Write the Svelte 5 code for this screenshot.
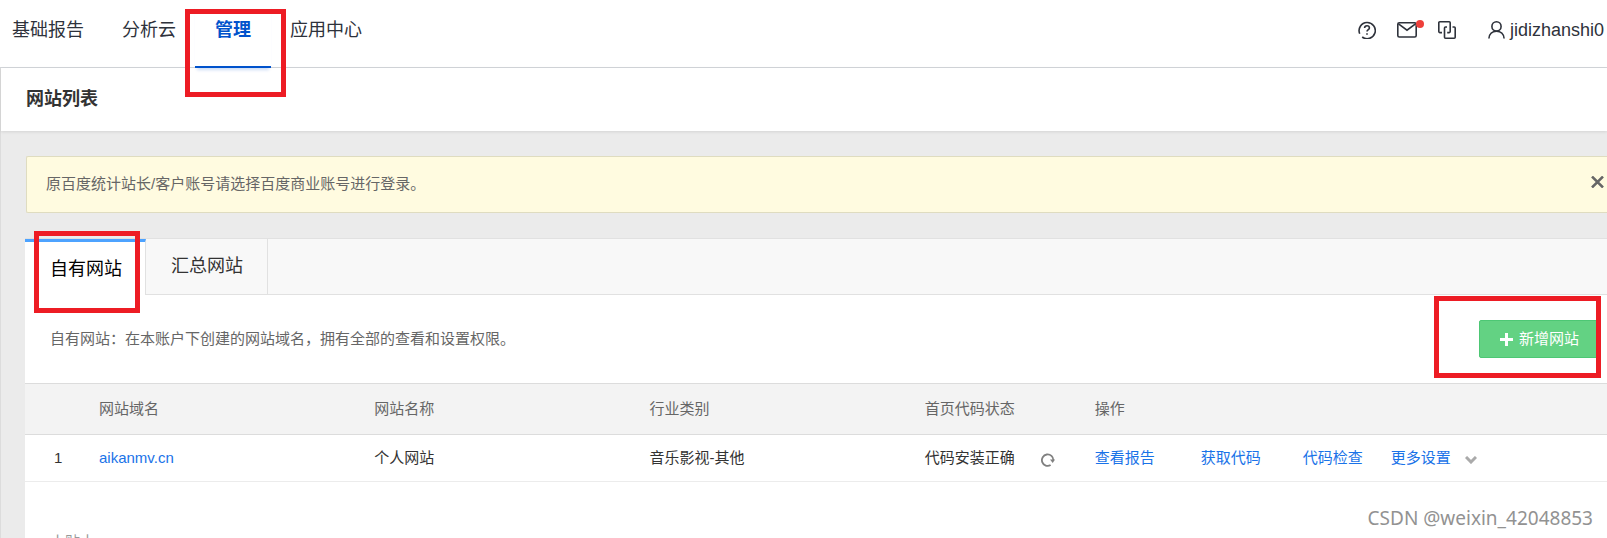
<script lang="ts">
    const navItems = ['基础报告', '分析云', '管理', '应用中心'];
    let activeNav = $state('管理');

    const tabs = ['自有网站', '汇总网站'];
    let activeTab = $state('自有网站');

    let showNotice = $state(true);

    const sites = [
        { id: 1, domain: 'aikanmv.cn', name: '个人网站', category: '音乐影视-其他', status: '代码安装正确' },
    ];
</script>

<svelte:head>
    <title>网站列表</title>
</svelte:head>

<div class="page">
    <header>
        <nav>
            {#each navItems as item}
                <a href="#top" class:active={activeNav === item} onclick={() => (activeNav = item)}>
                    {item}
                    {#if item === '管理'}<span class="mark mark-nav"></span>{/if}
                </a>
            {/each}
        </nav>
        <div class="tools">
            <button aria-label="帮助">
                <svg width="18" height="18" viewBox="0 0 18 18">
                    <path d="M4.2 16A8.1 8.1 0 1 0 1.7 12.7" />
                    <path d="M6.6 7.1C6.6 5.6 7.6 4.8 9 4.8s2.4.8 2.4 2.1c0 1.7-2.4 1.8-2.4 3.7M9 12.2v1.6" />
                </svg>
            </button>
            <button class="mail" aria-label="消息">
                <svg width="20" height="16" viewBox="0 0 20 16">
                    <rect x="0.8" y="0.8" width="18.4" height="14.2" rx="1.5" />
                    <path d="M1.5 1.8L10 8.2l8.5-6.4" />
                </svg>
                <span class="dot"></span>
            </button>
            <button class="copy" aria-label="切换">
                <svg width="18" height="18" viewBox="0 0 18 18">
                    <path d="M4 11.6H1.8a1 1 0 0 1-1-1V1.800a1 1 0 0 1 1-1h9.400a1 1 0 0 1 1 1v8.800a1 1 0 0 1-1 1H9.200" />
                    <path d="M9 6H7.500a1 1 0 0 0-1 1v9.200a1 1 0 0 0 1 1h8.700a1 1 0 0 0 1-1V7a1 1 0 0 0-1-1H14.500" />
                </svg>
            </button>
            <a href="#user" class="user">
                <svg width="17" height="18" viewBox="0 0 17 18">
                    <circle cx="8.5" cy="5.4" r="4.6" />
                    <path d="M0.9 17.5C1.2 13 4.3 10.2 8.5 10.2s7.3 2.8 7.6 7.3" />
                </svg>
                jidizhanshi0
            </a>
        </div>
    </header>

    <main>
        <h1>网站列表</h1>

        {#if showNotice}
            <div class="notice">
                <p>原百度统计站长/客户账号请选择百度商业账号进行登录。</p>
                <button aria-label="关闭" onclick={() => (showNotice = false)}>
                    <svg width="13" height="12" viewBox="0 0 13 12"><path d="M1 0.500l11 11M12 0.500L1 11.500" /></svg>
                </button>
            </div>
        {/if}

        <section class="panel">
            <div class="tabs">
                {#each tabs as tab}
                    <button class:active={activeTab === tab} onclick={() => (activeTab = tab)}>
                        {tab}
                        {#if tab === '自有网站'}<span class="mark mark-tab"></span>{/if}
                    </button>
                {/each}
                <div class="fill"></div>
            </div>

            <div class="intro">
                <p>自有网站：在本账户下创建的网站域名，拥有全部的查看和设置权限。</p>
                <button class="add">
                    <svg width="13" height="13" viewBox="0 0 13 13"><path d="M6.5 0v13M0 6.5h13" /></svg>
                    新增网站
                    <span class="mark mark-add"></span>
                </button>
            </div>

            <table>
                <colgroup>
                    <col class="col-id" />
                    <col class="col-text" />
                    <col class="col-text" />
                    <col class="col-text" />
                    <col class="col-status" />
                    <col />
                </colgroup>
                <thead>
                    <tr>
                        <th></th>
                        <th>网站域名</th>
                        <th>网站名称</th>
                        <th>行业类别</th>
                        <th>首页代码状态</th>
                        <th>操作</th>
                    </tr>
                </thead>
                <tbody>
                    {#each sites as site}
                        <tr>
                            <td class="id">{site.id}</td>
                            <td><a href="#site">{site.domain}</a></td>
                            <td>{site.name}</td>
                            <td>{site.category}</td>
                            <td>
                                <div class="status">
                                    {site.status}
                                    <button aria-label="刷新">
                                        <svg width="14" height="14" viewBox="0 0 14 14">
                                            <path class="arc" d="M9.6 12A5.700 5.700 0 1 1 12.300 7.500" />
                                            <path class="tip" d="M9 6.500h5l-2.300 3.500z" />
                                        </svg>
                                    </button>
                                </div>
                            </td>
                            <td>
                                <div class="actions">
                                    <a href="#report">查看报告</a>
                                    <a href="#code">获取代码</a>
                                    <a href="#check">代码检查</a>
                                    <button>
                                        更多设置
                                        <svg width="12" height="8" viewBox="0 0 12 8"><path d="M1 1l5 5 5-5" /></svg>
                                    </button>
                                </div>
                            </td>
                        </tr>
                    {/each}
                </tbody>
            </table>

            <h2>小贴士</h2>
        </section>
    </main>

    <div class="watermark">CSDN @weixin_42048853</div>
</div>

<style>
    :global(body) {
        margin: 0;
    }

    .page {
        position: relative;
        display: flex;
        flex-direction: column;
        height: 100vh;
        overflow: hidden;
        background: #ebebeb;
        color: #333;
        font-family: 'Liberation Sans', 'Noto Sans CJK SC', sans-serif;
        font-size: 15px;
        line-height: 24px;
    }

    p {
        margin: 0;
    }

    a {
        color: #1a73e8;
        text-decoration: none;
    }

    button {
        padding: 0;
        border: 0;
        background: none;
        color: inherit;
        font: inherit;
        cursor: pointer;
    }

    svg {
        display: block;
        flex: none;
        fill: none;
        stroke: #2e323b;
        stroke-width: 1.6;
    }

    header {
        display: flex;
        flex: none;
        justify-content: space-between;
        height: 67px;
        padding: 0 3px 0 12px;
        border-bottom: 1px solid #d3d6da;
        background: #fff;
    }

    nav {
        display: flex;
        margin-left: -19px;
    }

    nav a {
        position: relative;
        box-sizing: border-box;
        height: 68px;
        padding: 18px 19px 0;
        color: #2e323b;
        font-size: 18px;
    }

    nav a.active {
        padding: 18px 20px 0;
        border-bottom: 2px solid #0052cc;
        box-shadow: 0 4px 3px -2px rgba(0, 82, 204, 0.2);
        color: #0052cc;
        font-weight: bold;
    }

    .tools {
        display: flex;
        align-items: center;
        height: 60px;
    }

    .mail {
        position: relative;
        margin-left: 21px;
    }

    .dot {
        position: absolute;
        top: -2px;
        right: -7px;
        width: 8px;
        height: 8px;
        border-radius: 50%;
        background: #ee3f3a;
    }

    .copy {
        margin-left: 21px;
    }

    .user {
        display: flex;
        align-items: center;
        gap: 5px;
        margin-left: 32px;
        color: #2e323b;
        font-size: 18px;
    }

    main {
        flex: 1;
        border-left: 1px solid #dcdcdc;
    }

    h1 {
        margin: 0;
        padding: 19px 25px 20px;
        background: #fff;
        box-shadow: 0 1px 3px rgba(0, 0, 0, 0.1);
        font-size: 18px;
        line-height: 24px;
    }

    .notice {
        display: flex;
        justify-content: space-between;
        margin: 25px 0 25px 25px;
        padding: 15px 3px 16px 19px;
        border: 1px solid #dfdcc0;
        border-right: 0;
        border-radius: 2px 0 0 2px;
        background: #fffbe0;
        color: #666;
    }

    .notice button {
        height: 20px;
    }

    .notice svg {
        stroke: #666;
        stroke-width: 2.5;
    }

    .panel {
        margin-left: 24px;
        background: #fff;
    }

    .tabs {
        display: flex;
        border-top: 1px solid #e1e1e1;
        background: #f8f8f8;
    }

    .tabs button {
        position: relative;
        height: 56px;
        padding: 0 24px 2px 25px;
        border-right: 1px solid #e1e1e1;
        border-bottom: 1px solid #e1e1e1;
        font-size: 18px;
    }

    .tabs button.active {
        padding: 0 23px 0 25px;
        border-top: 3px solid #4da3ff;
        border-bottom: 0;
        background: #fff;
        color: #000;
    }

    .fill {
        flex: 1;
        border-bottom: 1px solid #e1e1e1;
    }

    .intro {
        display: flex;
        align-items: center;
        justify-content: space-between;
        height: 88px;
        padding: 0 8px 0 25px;
        color: #666;
    }

    .add {
        position: relative;
        display: flex;
        align-items: center;
        gap: 6px;
        height: 38px;
        padding: 0 19px 0 20px;
        border: 1px solid #4dc774;
        border-radius: 2px;
        background: #63d283;
        color: #fff;
    }

    .add svg {
        stroke: #fff;
        stroke-width: 3;
    }

    table {
        width: 100%;
        border-collapse: separate;
        border-spacing: 0;
        table-layout: fixed;
    }

    .col-id {
        width: 74px;
    }

    .col-text {
        width: 17.4%;
    }

    .col-status {
        width: 170px;
    }

    th {
        height: 50px;
        padding: 0;
        border-top: 1px solid #dcdcdc;
        border-bottom: 1px solid #dcdcdc;
        background: #f3f3f3;
        color: #666;
        font-weight: normal;
        text-align: left;
    }

    td {
        height: 46px;
        padding: 0;
        border-bottom: 1px solid #ececec;
    }

    .id {
        padding-left: 29px;
    }

    .status {
        display: flex;
        align-items: center;
        gap: 26px;
    }

    .status button {
        padding-top: 4px;
    }

    .arc {
        stroke: #808080;
        stroke-width: 1.8;
    }

    .tip {
        fill: #808080;
        stroke: none;
    }

    .actions {
        display: grid;
        grid-template-columns: 106px 102px 88px auto;
    }

    .actions button {
        display: flex;
        align-items: center;
        gap: 14px;
        color: #1a73e8;
    }

    .actions svg {
        margin-top: 4px;
        stroke: #aaa;
        stroke-width: 3;
    }

    h2 {
        margin: 0;
        padding: 48px 25px 40px;
        color: #999;
        font-size: 15px;
        font-weight: normal;
        line-height: 24px;
    }

    /* red frames around the steps to click */
    .mark {
        position: absolute;
        box-sizing: border-box;
        border: 5px solid #ed1c24;
        pointer-events: none;
    }

    .mark-nav {
        z-index: 1;
        top: 9px;
        left: -10px;
        width: 101px;
        height: 88px;
    }

    .mark-tab {
        top: -11px;
        left: 9px;
        width: 106px;
        height: 82px;
    }

    .mark-add {
        top: -25px;
        right: -3px;
        width: 167px;
        height: 82px;
    }

    .watermark {
        position: absolute;
        right: 14px;
        bottom: 8px;
        color: #929292;
        font-family: 'Noto Sans', sans-serif;
        font-size: 19px;
    }
</style>
